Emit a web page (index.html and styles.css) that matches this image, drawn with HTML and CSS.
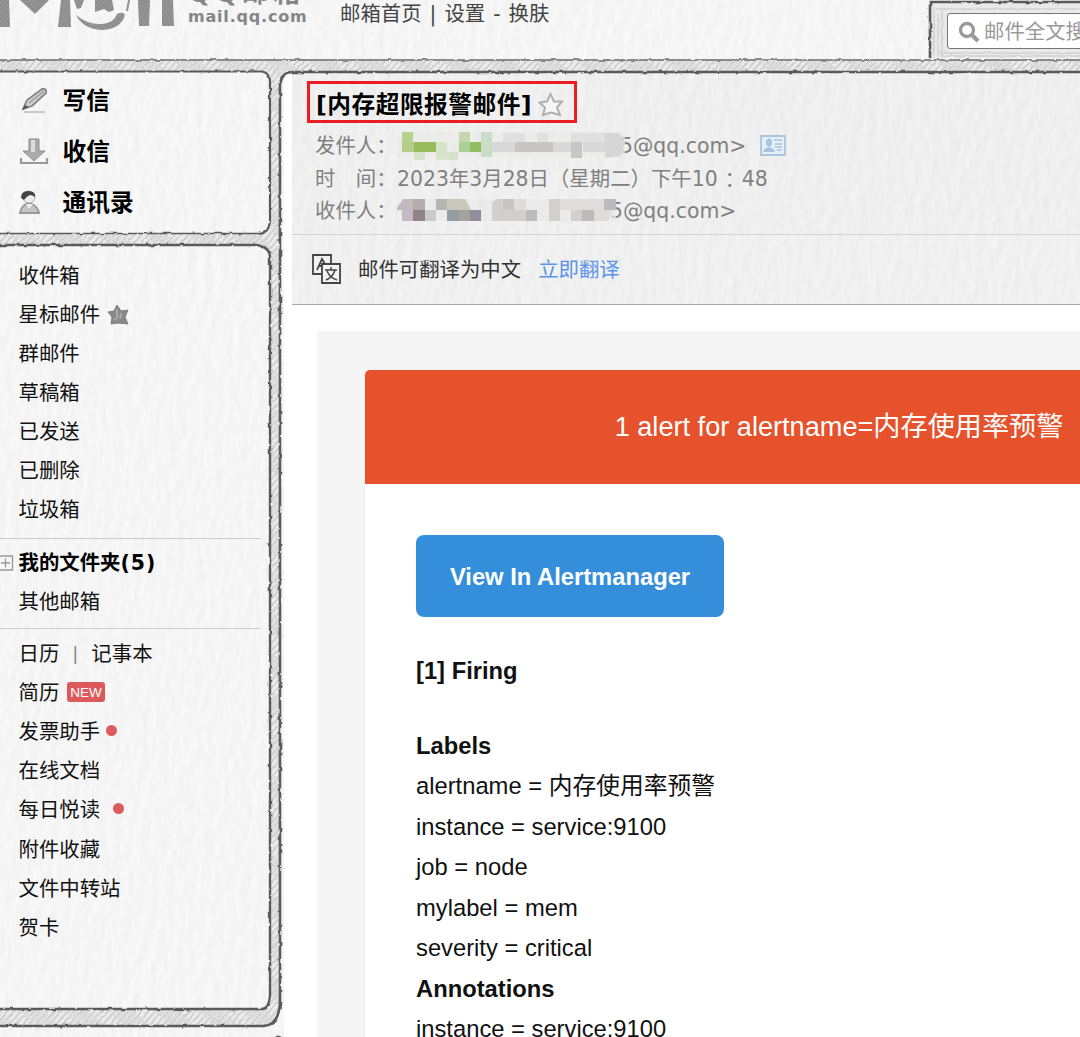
FILE: index.html
```html
<!DOCTYPE html>
<html lang="zh-CN">
<head>
<meta charset="utf-8">
<title>QQ邮箱</title>
<link rel="stylesheet" href="styles.css">
</head>
<body>
<svg class="paper" width="1080" height="1037" viewBox="0 0 1080 1037" aria-hidden="true">
  <defs>
    <filter id="grain" x="0" y="0" width="100%" height="100%" color-interpolation-filters="sRGB">
      <feTurbulence type="fractalNoise" baseFrequency="0.11 0.06" numOctaves="2" seed="4" result="n"/>
      <feDiffuseLighting in="n" surfaceScale="0.14" diffuseConstant="1.11" lighting-color="#fff"><feDistantLight azimuth="20" elevation="60"/></feDiffuseLighting>
    </filter>
    <filter id="rough" filterUnits="userSpaceOnUse" x="-10" y="-10" width="1100" height="1057" color-interpolation-filters="sRGB">
      <feTurbulence type="fractalNoise" baseFrequency="0.14" numOctaves="2" seed="8"/>
      <feDisplacementMap in="SourceGraphic" scale="3" xChannelSelector="R" yChannelSelector="G"/>
    </filter>
    <pattern id="hatch" width="5" height="30" patternUnits="userSpaceOnUse" patternTransform="rotate(42)">
      <rect width="5" height="30" fill="#ececec"/><path d="M2 0V30" stroke="#b4b4b4" stroke-width="1"/><path d="M4.500 2V19" stroke="#d0d0d0" stroke-width="1"/>
    </pattern>
    <pattern id="logohatch" width="3" height="3" patternUnits="userSpaceOnUse" patternTransform="rotate(40)">
      <rect width="3" height="3" fill="#9c9c9c"/><path d="M1 0V3" stroke="#7b7b7b"/>
    </pattern>
  </defs>
  <rect width="1080" height="1037" filter="url(#grain)"/>
  <g filter="url(#rough)">
    <path fill="url(#hatch)" d="M-5 60H1090V72H292Q282 72 280 84V1008Q279 1026 266 1026H-5V1009H262Q269 1009 270 998V256Q269 245 256 245H-5V233H260Q270 232 270 222V80Q270 72 264 72H-5Z"/>
    <g fill="none" stroke="#5a5a5a">
      <path stroke="#8a8a8a" stroke-width="2" d="M-5 60H1090"/>
      <path stroke-width="2.200" d="M-5 71.500H262Q270 73 270 82V222Q269 233 259 234"/>
      <path stroke-width="1.500" d="M-5 233.500H260"/>
      <path stroke-width="2.400" d="M-5 245H256Q269 246 270 257V996Q269 1008 262 1009H-5"/>
      <path stroke-width="2.600" d="M1090 72H293Q282 72 280 84V1002Q279 1025 264 1026H-5"/>
    </g>
    <path fill="#e9e9e9" d="M930 2H1090V58H930Z"/>
    <path stroke="#c6c6c6" fill="none" d="M936 9H1080M938 14V56M942 10V58M934 7V55M940 53H1080M942 56H1080"/>
    <path d="M930 58V2H1090" fill="none" stroke="#5a5a5a" stroke-width="2.600"/>
  </g>
  <path d="M275 1037Q278 1034 282 1037Z" fill="#666"/>
</svg>

<header class="topbar">
  <div class="brand">
    <svg width="180" height="34" viewBox="0 0 180 34" aria-label="Mail">
      <g fill="url(#logohatch)">
        <path d="M0 0H9L10 27H0ZM20 0H49L35 14ZM61 0H70L71 27H58ZM74 0H84L81 8L77 9ZM76 15Q88 25 102 24Q114 23 117 14Q123 11 125 15Q121 29 102 30Q83 29 76 15ZM95 0H112L114 10L109 12L104 9L95 12ZM128 0H130L128 11H126ZM138 0H150L149 26H139ZM162 0H173L174 26H162Z"/>
      </g>
    </svg>
    <div class="brand-text"><span class="brand-cn">QQ邮箱</span><span class="brand-url">mail.qq.com</span></div>
  </div>
  <nav class="topnav">邮箱首页<i>|</i>设置<i>-</i>换肤</nav>
  <div class="search">
    <svg width="22" height="22" viewBox="0 0 22 22"><circle cx="9" cy="9" r="6.500" fill="none" stroke="#999" stroke-width="3.300"/><path d="M14 14L20 20" stroke="#999" stroke-width="4"/></svg>
    <span>邮件全文搜索</span>
  </div>
</header>

<div class="layout">
  <aside class="sidebar">
    <nav class="actions">
      <a><svg width="32" height="32" viewBox="0 0 32 32"><path d="M4 24L8 15L23 4Q28 3 27 8L13 21Z" fill="#d0d0d0" stroke="#858585" stroke-width="1.800"/><path d="M10 18L25 6" stroke="#999" stroke-width="1.500"/><path d="M3 25L6 20L10 22Z" fill="#555"/><path d="M5 27H26" stroke="#bbb" stroke-width="1.500"/></svg>写信</a>
      <a><svg width="32" height="32" viewBox="0 0 32 32"><path d="M10 3H20V15H26L15 25L4 15H10Z" fill="#aaa" stroke="#909090"/><path d="M14 4V16" stroke="#ddd" stroke-width="4"/><path d="M2 22V27H28V22" fill="none" stroke="#999" stroke-width="2.200"/></svg>收信</a>
      <a><svg width="32" height="32" viewBox="0 0 32 32"><circle cx="10" cy="10" r="6" fill="#eee" stroke="#aaa"/><path d="M2 11Q2 4 9 4Q17 4 16 10Q13 8 11 8Q8 9 5 13Z" fill="#444"/><path d="M1 26Q2 20 7 17H13Q19 20 20 26Z" fill="#c4c4c4" stroke="#999" stroke-width="1.800"/><path d="M7 17L10 22L14 17" fill="#eee"/></svg>通讯录</a>
    </nav>
    <nav class="folders">
      <a>收件箱</a>
      <a>星标邮件<svg class="mark" width="23" height="22" viewBox="0 0 23 22"><path d="M10 1L14 7L21 6L18 13L21 20L11 19L4 20L5 13L1 8L7 7Z" fill="#888" stroke="#808080"/><path d="M10 5V14L7 16M14 9L13 15" stroke="#aaa" fill="none" stroke-width="2"/></svg></a>
      <a>群邮件</a>
      <a>草稿箱</a>
      <a>已发送</a>
      <a>已删除</a>
      <a>垃圾箱</a>
    </nav>
    <nav class="folders mine">
      <a class="strong"><svg class="plus" width="14" height="16" viewBox="0 0 14 16"><path d="M-2 1H12.500V15H-2M1 8H10M5.500 3.500V12.500" fill="none" stroke="#999" stroke-width="1.300"/></svg>我的文件夹<span class="count">(5)</span></a>
      <a>其他邮箱</a>
    </nav>
    <nav class="folders tools">
      <a>日历<i class="sep">|</i>记事本</a>
      <a>简历<b class="new">NEW</b></a>
      <a>发票助手<b class="dot"></b></a>
      <a>在线文档</a>
      <a>每日悦读<b class="dot far"></b></a>
      <a>附件收藏</a>
      <a>文件中转站</a>
      <a>贺卡</a>
    </nav>
  </aside>

  <main class="reader">
    <section class="mail-head">
      <h1><span>[内存超限报警邮件]</span><svg width="26" height="26" viewBox="0 0 26 26"><path d="M12.500 2L16 9.500L24 9.500L19 15.500L22 23L13 20.500L5 23L7 15.500L1.500 10.500L9 9.500Z" fill="#f6f6f6" stroke="#b0b0b0" stroke-width="2"/></svg></h1>
      <div class="meta"><span class="key">发件人：</span><svg class="mosaic" width="228" height="30" viewBox="0 0 228 30">
        <path fill="#e9ebe7" d="M0 7L8 1H228V26H0Z" opacity=".7"/>
        <path fill="#b5d38c" d="M5 1H16V11H5Z"/><path fill="#b8cc8a" d="M5 11H17V21H5Z"/><path fill="#98bb5e" d="M17 11H39V21H17Z"/><path fill="#cfdfb9" d="M17 21H28V29H17ZM39 11H50V21H39ZM39 21H61V29H39Z" opacity=".7"/><path fill="#c3d8ac" d="M62 1H73V11H62Z"/><path fill="#acd093" d="M62 11H73V21H62Z"/><path fill="#91bd62" d="M73 11H84V21H73Z"/><path fill="#c9ddc7" d="M84 1H95V26H84Z"/>
        <path fill="#d8d8d8" d="M95 11H118V21H95ZM156 11H175V21H156ZM186 11H208V21H186Z"/><path fill="#c8c6c5" d="M118 11H156V21H118ZM174 11H185V27H174Z"/><path fill="#e0e0e0" d="M106 2H128V11H106ZM140 2H151V11H140ZM174 2H208V11H174Z"/><path fill="#d6d6d6" d="M208 2H222L228 11L224 25L208 27Z"/></svg>5@qq.com&gt;<svg class="card-icon" width="26" height="22" viewBox="0 0 26 22"><path d="M1 1H25V20H1Z" fill="#e6eff6" stroke="#a9c6de" stroke-width="1.800"/><ellipse cx="9" cy="7.500" rx="3" ry="4" fill="#a5c5e2"/><path d="M3 17Q4 13 9 12Q14 13 15 17Z" fill="#a5c5e2"/><path d="M14 5H22M15 9H22M15 12H22M17 15H22" stroke="#a5c5e2" stroke-width="1.500"/></svg></div>
      <div class="meta"><span class="key">时　间：</span>2023年3月28日（星期二）下午10<span class="mid-colon">：</span>48</div>
      <div class="meta"><span class="key">收件人：</span><svg class="mosaic to" width="219" height="30" viewBox="0 0 219 30">
        <path fill="#e8e8e8" d="M0 9L8 3H219V25H5Z" opacity=".7"/>
        <path fill="#c1bbbf" d="M0 12L6 3H16V14H0Z"/><path fill="#b4adab" d="M16 3H28V14H16Z"/><path fill="#c7b9c1" d="M5 14H16V25H5Z"/><path fill="#918489" d="M16 14H28V25H16Z"/><path fill="#c9ccca" d="M28 14H39V25H28Z"/><path fill="#b7b7b1" d="M39 3H50V14H39Z"/><path fill="#cac7bd" d="M50 3H68L74 14H50Z"/><path fill="#929da5" d="M50 14H62V25H50Z"/><path fill="#a5a39b" d="M62 14H73V25H62Z"/><path fill="#918c9e" d="M73 14H84V25H73Z"/>
        <path fill="#d1d0cf" d="M95 6L100 3H117V14H95ZM95 14H129V25H95ZM152 3H163V25H152ZM174 14H185V25H174Z"/><path fill="#c9c5c2" d="M106 3H117V14H106Z"/><path fill="#bcbaba" d="M129 14H140V25H129ZM185 14H197V25H185ZM207 3H219V14H207Z"/><path fill="#dedddc" d="M117 3H129V14H117ZM163 3H207V14H163ZM197 14H216L211 25H197Z"/></svg>5@qq.com&gt;</div>
    </section>
    <section class="translate">
      <svg width="30" height="31" viewBox="0 0 30 31"><path d="M10 20H1V1H19V10" fill="none" stroke="#444" stroke-width="1.800"/><path d="M5 16L10 5L13 10M7 12H10" fill="none" stroke="#444" stroke-width="1.800"/><path d="M10 10H28V29H10Z" fill="#f3f3f3" stroke="#444" stroke-width="1.800"/><path d="M13 16H25M19 13V16M14 26Q21 23 23 16M15 17Q18 24 25 26" fill="none" stroke="#444" stroke-width="1.500"/></svg>
      <span>邮件可翻译为中文</span><a>立即翻译</a>
    </section>
    <article class="mail-body">
      <div class="canvas">
        <div class="alert">
          <h2>1 alert for alertname=内存使用率预警</h2>
          <div class="content">
            <a class="button">View In Alertmanager</a>
            <p class="firing"><b>[1] Firing</b></p>
            <p><b>Labels</b><br>alertname = 内存使用率预警<br>instance = service:9100<br>job = node<br>mylabel = mem<br>severity = critical<br><b>Annotations</b><br>instance = service:9100</p>
          </div>
        </div>
      </div>
    </article>
  </main>
</div>
</body>
</html>
```
FILE: styles.css
```css
* { box-sizing: border-box; }
body {
  margin: 0;
  width: 1080px;
  height: 1037px;
  overflow: hidden;
  position: relative;
  font: 20.4px/32px "DejaVu Sans", "Noto Sans CJK SC", sans-serif;
  color: #111;
  background: #f6f6f6;
}
svg { display: block; flex: none; }
i { font-style: normal; }
.paper { position: absolute; inset: 0; z-index: -1; }

.topbar { display: flex; height: 73px; }
.brand { display: flex; flex: none; width: 340px; }
.brand-text { display: flex; flex-direction: column; margin-left: 8px; color: #858585; font-weight: bold; white-space: nowrap; }
.brand-cn { height: 28px; margin-top: -21px; font-size: 27px; line-height: 28px; letter-spacing: 4px; }
.brand-url { font-size: 16px; line-height: 20px; letter-spacing: .8px; }
.topnav { flex: none; width: 607px; line-height: 29px; color: #444; white-space: nowrap; }
.topnav i { margin: 0 8px; }
.search {
  display: flex;
  align-items: center;
  flex: none;
  width: 160px;
  height: 36px;
  margin-top: 13px;
  padding: 2px 0 0 10px;
  gap: 4px;
  border: 1.500px solid #777;
  border-radius: 3px;
  background: #fff;
  color: #999;
  white-space: nowrap;
}

.layout { display: flex; height: 964px; }
.sidebar { flex: none; width: 284px; }
.actions { height: 173px; padding-top: 2px; font-size: 23.7px; font-weight: bold; color: #000; }
.actions a { display: flex; align-items: center; height: 51px; padding-left: 19px; gap: 11.500px; }
.folders { width: 261px; padding: 10px 0 8px 18.500px; }
.folders a { display: flex; align-items: center; height: 39.150px; white-space: nowrap; }
.folders.mine { border-top: 1px solid #ccc; border-bottom: 1px solid #ccc; padding: 4px 0 7px 0; }
.mine a { padding-left: 18.500px; }
.mine .strong { padding-left: 0; font-weight: bold; color: #000; }
.count { letter-spacing: 1px; }
.plus { margin-right: 4.500px; }
.folders.tools { padding-top: 5px; }
.mark { margin-left: 7px; }
.sep { margin: 0 13px; color: #888; font-size: 18px; }
.new { margin: -2px 0 0 8px; padding: 0 3px; height: 20px; border-radius: 3px; background: #dc5a5c; color: #fff; font: 13.500px/21px "Liberation Sans", sans-serif; }
.dot { width: 11px; height: 11px; margin: -4px 0 0 6px; border-radius: 50%; background: #dc5a5c; }
.dot.far { margin-left: 13px; }

.reader { flex: none; width: 796px; overflow: hidden; border-top-left-radius: 10px; background: linear-gradient(#fff, #fff) 0 0 / 8px 100% no-repeat; }
.mail-head { height: 162px; margin-left: 8px; padding: 8px 0 0 15px; border-bottom: 1px solid #d5d5d5; background: rgba(0, 0, 0, .025); color: #808080; }
h1 {
  display: flex;
  align-items: center;
  gap: 6px;
  width: 270px;
  height: 42px;
  margin: 0 0 7px;
  padding: 6px 0 0 6px;
  border: 3px solid #ec1c24;
  color: #000;
  font-size: 23.700px;
  letter-spacing: .5px;
  white-space: nowrap;
}
.meta { display: flex; align-items: center; height: 32.500px; padding-left: 8px; white-space: nowrap; }
.key { width: 82px; flex: none; }
.mosaic { margin: 0 -5px 0 0; position: relative; }
.mosaic.to { margin-right: -6px; }
.mid-colon { width: 24px; text-align: center; font-family: "Noto Sans CJK TC", sans-serif; }
.card-icon { margin-left: 14px; }
.translate { display: flex; align-items: center; height: 70px; margin-left: 8px; padding-left: 20px; border-bottom: 1px solid #aaa; background: rgba(0, 0, 0, .02); color: #333; }
.translate span { margin: 0 17px 0 16px; }
.translate a { color: #5a94e8; }

.mail-body { height: 732px; padding: 26px 0 0 33px; background: #fff; font-family: "Liberation Sans", "Noto Sans CJK SC", sans-serif; }
.canvas { height: 706px; padding: 39px 0 0 48px; background: #f5f5f5; }
.alert { width: 948px; border-radius: 5px; overflow: hidden; background: #fff; box-shadow: 0 0 0 1px #eee; color: #111; }
h2 { margin: 0; height: 114px; background: #e6522c; color: #fff; font-size: 27.150px; font-weight: normal; line-height: 114px; text-align: center; }
.content { height: 560px; padding: 51px 51px 0; font-size: 23.750px; line-height: 40.500px; }
.button { display: block; width: 308px; height: 82px; border-radius: 8px; background: #348eda; color: #fff; font-weight: bold; line-height: 83px; text-align: center; }
.content p { margin: 0 0 34px; }
.content .firing { margin-top: 34px; }
```
